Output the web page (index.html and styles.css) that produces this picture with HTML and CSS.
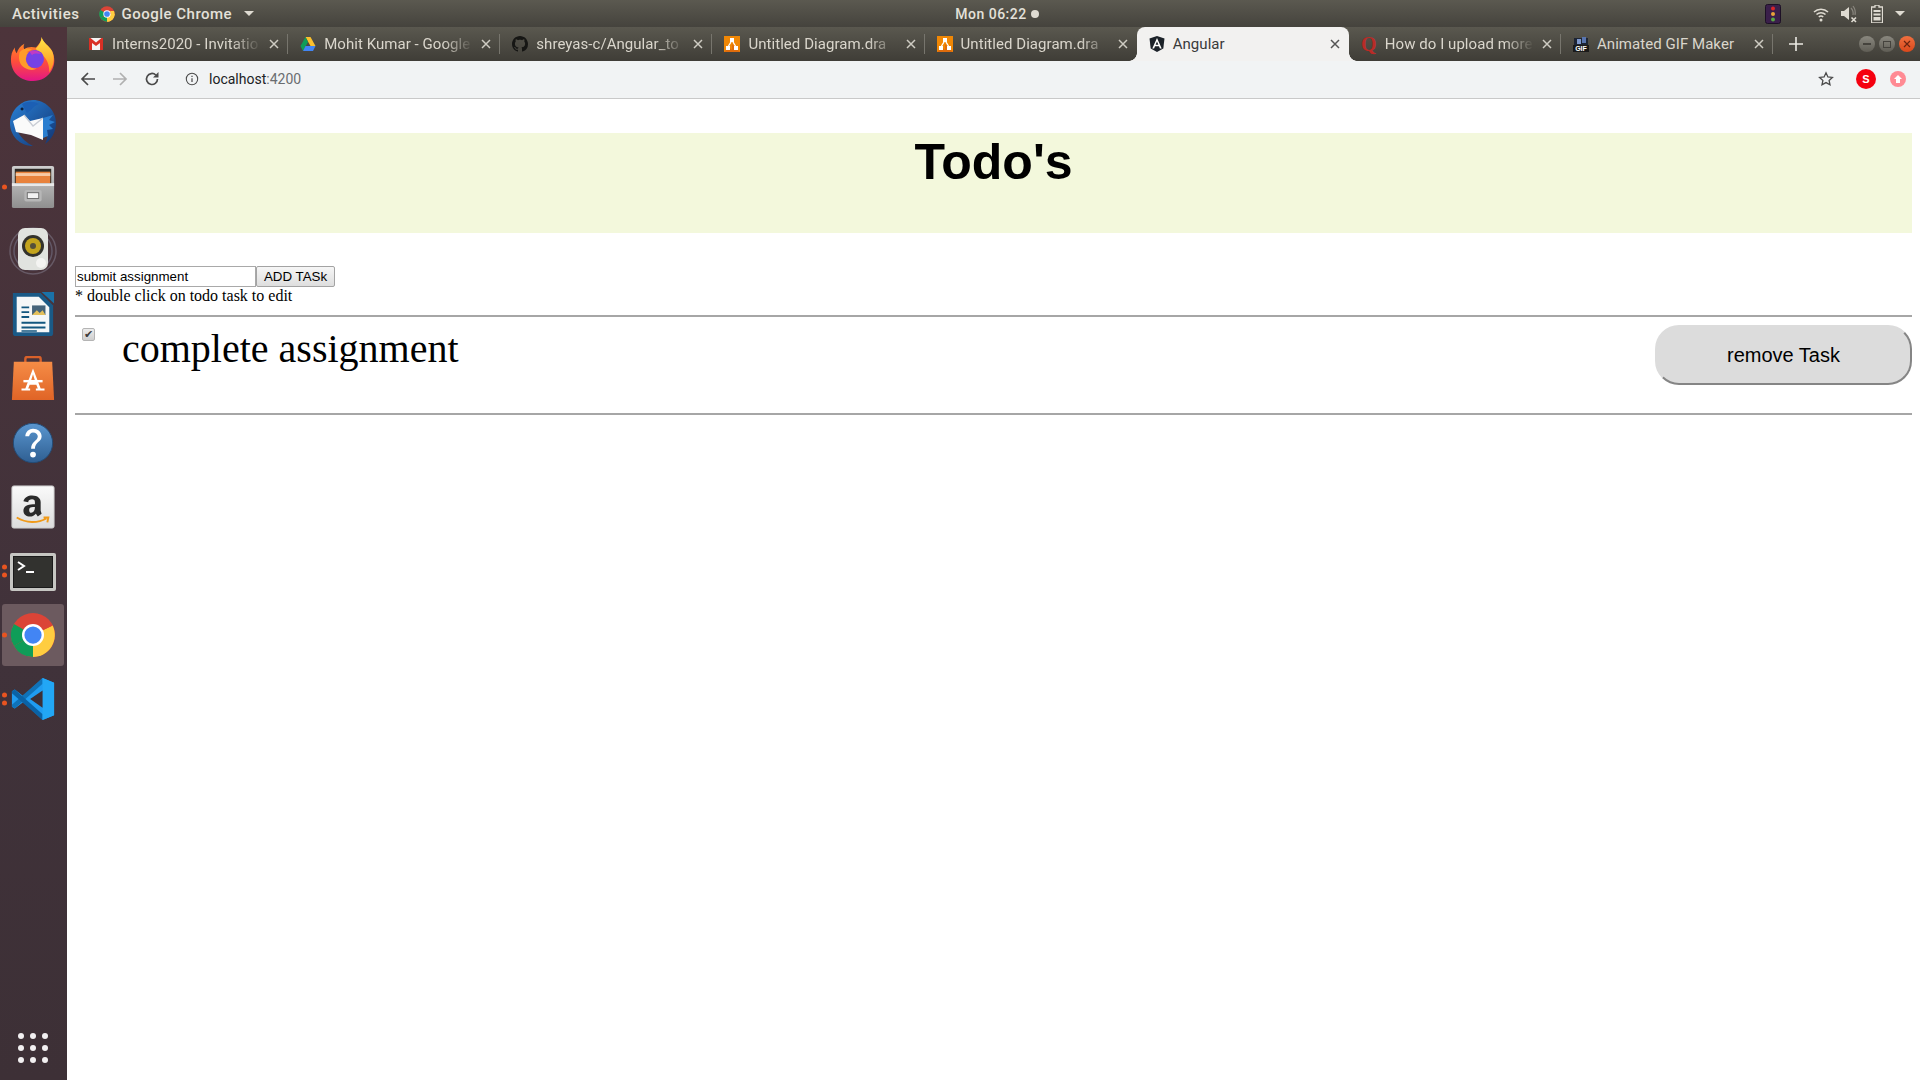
FILE: index.html
```html
<!DOCTYPE html>
<html lang="en">
<head>
<meta charset="utf-8">
<title>Angular</title>
<link rel="stylesheet" href="styles.css">
</head>
<body>
<svg class="sprite" xmlns="http://www.w3.org/2000/svg">
  <symbol id="x" viewBox="0 0 10 10"><path d="M1 1l8 8M9 1l-8 8" stroke="currentColor" stroke-width="1.5" fill="none"/></symbol>
  <symbol id="drawio" viewBox="0 0 16 16"><rect width="16" height="16" fill="#f08705"/><path d="M8 16V8l8 8zM0 16l5-5 5 5z" fill="#df6c0c"/><path d="M6 2h4v4H6zM2 10h4v4H2zM10 10h4v4h-4z" fill="#fff"/><path d="M7 6L4.5 10M9 6l2.500 4" stroke="#fff" stroke-width="1.400"/></symbol>
</svg>

<header class="topbar">
  <div class="top-left">
    <span class="top-item">Activities</span>
    <span class="app-menu">
      <svg class="chrome-mini" viewBox="0 0 48 48"><circle cx="24" cy="24" r="23" fill="#db4437"/><path d="M24 24L4 36a23 23 0 0 1 0-24z" fill="#0f9d58"/><path d="M4 35.500A23 23 0 0 0 24 47l12-23z" fill="#0f9d58"/><path d="M24 24h23a23 23 0 0 1-23 23z" fill="#ffcd40"/><path d="M45 15a23 23 0 0 1-21 32l12-23-3-9z" fill="#ffcd40"/><circle cx="24" cy="24" r="11" fill="#fff"/><circle cx="24" cy="24" r="8.500" fill="#4285f4"/></svg>
      <span class="top-item">Google Chrome</span>
      <span class="caret"></span>
    </span>
  </div>
  <div class="clock"><span class="top-item">Mon 06:22</span><span class="clock-dot"></span></div>
  <div class="tray">
    <svg class="tray-traffic" viewBox="0 0 16 20"><rect x=".5" y=".5" width="15" height="19" rx="2" fill="#3a1f4a" stroke="#1d1026"/><circle cx="8" cy="4.500" r="2" fill="#d9252a"/><circle cx="8" cy="10" r="2" fill="#e8a33a"/><circle cx="8" cy="15.500" r="2" fill="#58a845"/></svg>
    <svg class="tray-wifi" viewBox="0 0 16 16"><path d="M1 6a10 10 0 0 1 14 0M3.500 8.500a6.500 6.500 0 0 1 9 0M5.800 11a3.200 3.200 0 0 1 4.400 0" stroke="#dfdbd2" stroke-width="1.500" fill="none"/><circle cx="8" cy="14" r="1.500" fill="#dfdbd2"/></svg>
    <svg class="tray-vol" viewBox="0 0 18 18"><path d="M1 6h3l5-4v13l-5-4H1z" fill="#dfdbd2"/><path d="M11 3a8 8 0 0 1 2 7M13 1a11 11 0 0 1 2 9" stroke="#8a877f" stroke-width="1.200" fill="none"/><path d="M11.500 12.500l4.500 4.500M16 12.500l-4.500 4.500" stroke="#dfdbd2" stroke-width="1.600"/></svg>
    <svg class="tray-bat" viewBox="0 0 12 18"><path d="M4 0h4v2h3.500v16H.5V2H4z" fill="none" stroke="#dfdbd2" stroke-width="1.300"/><path d="M2.500 5h7v2h-7zM2.500 8.500h7v2h-7zM2.500 12h7v3.500h-7z" fill="#dfdbd2"/></svg>
    <span class="caret tray-caret"></span>
  </div>
</header>

<div class="desktop">
  <nav class="dock">
    <div class="dock-list">
      <div class="dock-item">
        <svg class="dock-icon" viewBox="0 0 48 48"><defs><linearGradient id="ffa" x1="0" y1="0" x2="0" y2="1"><stop offset="0" stop-color="#ff9a20"/><stop offset=".55" stop-color="#ff4f3a"/><stop offset="1" stop-color="#e31587"/></linearGradient><linearGradient id="ffb" x1="0" y1="0" x2="0" y2="1"><stop offset="0" stop-color="#ffe847"/><stop offset="1" stop-color="#ff8a1f"/></linearGradient></defs><path d="M33 1c1 6 8 9 11 15 3 7 3 13 0 19-4 8-12 12-20 12C11 47 1 38 1 25c0-5 1-9 4-13 0 3 1 5 2 6 1-4 4-8 8-10-1 2-1 4 0 6 3-3 8-3 12-2 3-3 6-7 6-11z" fill="url(#ffa)"/><path d="M33 1c1 6 8 9 11 15 3 7 2 15-3 22 0-6-1-12-6-17-3-3-7-5-8-8 3-3 6-7 6-12z" fill="url(#ffb)"/><path d="M10 17c3-4 8-5 13-3l-6 3c3 0 5 2 7 2-6 1-7 5-6 8 1 5 5 7 10 7-5 3-13 1-17-5-2-4-2-8-1-12z" fill="#ff9c2a"/><circle cx="26" cy="24" r="9.500" fill="#7542e5"/><path d="M20 16c4-2 10-1 13 3-4-1-8-1-10 1z" fill="#c03bc4"/></svg>
      </div>
      <div class="dock-item">
        <svg class="dock-icon wide" viewBox="0 0 48 48"><defs><linearGradient id="tb" x1="0" y1="0" x2="1" y2="1"><stop offset="0" stop-color="#2a82d8"/><stop offset="1" stop-color="#12336f"/></linearGradient></defs><path d="M24 1c12 0 23 10 23 23 0 9-5 17-11 21 3-5 3-12 0-18L24 36 9 33c3 6 9 11 15 14C11 47 1 37 1 24 1 20 3 12 9 7c4-4 9-6 15-6z" fill="url(#tb)"/><path d="M13 5c5-3 12-3 17 0-3 1-6 3-8 6l-4 3-3-5z" fill="#1c5fb4"/><path d="M13 8.500a1.500 1.500 0 1 0 .1 0z" fill="#0b1f3d"/><path d="M4 22l11-6 6 6 13-3v22L22 36 7 33z" fill="#fafafa"/><path d="M15 16l9 11 10-8" stroke="#c8ccd4" stroke-width="1.300" fill="none"/><path d="M34 19l10-3-4 5 6 2-6 3 4 4-6 1 1 6-5 2z" fill="#2a7ed0"/></svg>
      </div>
      <div class="dock-item running">
        <span class="pips"><span class="pip"></span></span>
        <svg class="dock-icon" viewBox="0 0 48 48"><defs><linearGradient id="cab" x1="0" y1="0" x2="0" y2="1"><stop offset="0" stop-color="#cfcfcf"/><stop offset="1" stop-color="#8f8f8f"/></linearGradient></defs><rect x="2" y="2" width="44" height="44" rx="2" fill="url(#cab)"/><rect x="5" y="5" width="38" height="16" fill="#2c2925"/><rect x="6" y="8" width="36" height="12" fill="#e8823c"/><rect x="6" y="9.500" width="36" height="3" fill="#f7c9a4"/><rect x="2" y="20" width="44" height="3" fill="#e9e9e9"/><rect x="15" y="27" width="18" height="12" rx="2" fill="#b7b7b7"/><rect x="18" y="30" width="12" height="6" fill="#f2f2f2" stroke="#555" stroke-width=".8"/></svg>
      </div>
      <div class="dock-item">
        <svg class="dock-icon wide" viewBox="0 0 48 48"><circle cx="24" cy="24" r="23" fill="none" stroke="#675a66" stroke-width="1.500"/><circle cx="24" cy="24" r="19" fill="none" stroke="#625867" stroke-width="1.500"/><rect x="9" y="1" width="30" height="42" rx="7" fill="#e1e3df"/><circle cx="24" cy="19" r="11" fill="#33322c"/><circle cx="24" cy="19" r="8" fill="#c3a41d"/><circle cx="24" cy="19" r="3" fill="#55503a"/><circle cx="32" cy="36" r="5" fill="#f4f4f2"/></svg>
      </div>
      <div class="dock-item">
        <svg class="dock-icon" viewBox="0 0 48 48"><path d="M3 1h29l13 13v29a3 3 0 0 1-3 3H6a3 3 0 0 1-3-3z" fill="#1a5a87"/><path d="M7 5h23l11 11v26H7z" fill="#f5f7f8"/><path d="M33 0h13v12z" fill="#1a72a8"/><path d="M12 15h8v2h-8zM12 20h8v2h-8zM12 25h8v2h-8zM12 31h25v2H12zM12 36h25v2H12zM12 40h16v1.500H12z" fill="#13577f"/><rect x="23" y="14" width="14" height="10" fill="#45637a"/><path d="M23 24l5-5 3 3 3-3 3 5z" fill="#e4c05b"/></svg>
      </div>
      <div class="dock-item">
        <svg class="dock-icon" viewBox="0 0 48 48"><defs><linearGradient id="shop" x1="0" y1="0" x2="0" y2="1"><stop offset="0" stop-color="#f58c46"/><stop offset="1" stop-color="#e06426"/></linearGradient></defs><path d="M16 8V3q0-2 2-2h12q2 0 2 2v5" fill="none" stroke="#d9612a" stroke-width="2.500"/><path d="M4 6h40l2 40H2z" fill="url(#shop)"/><path d="M24 13l-8 21h-4v2h9v-2h-2l1.500-4h7l1.500 4h-2v2h9v-2h-4zM21.500 27l2.500-8 2.500 8z" fill="#fff"/><rect x="14" y="25" width="20" height="2.500" fill="#fff"/></svg>
      </div>
      <div class="dock-item">
        <svg class="dock-icon" viewBox="0 0 48 48"><defs><linearGradient id="help" x1="0" y1="0" x2="0" y2="1"><stop offset="0" stop-color="#5a96cf"/><stop offset="1" stop-color="#2f5f92"/></linearGradient></defs><circle cx="24" cy="24" r="20.500" fill="url(#help)" stroke="#234b76"/><path d="M16 17c0-5 4-8 8-8 5 0 9 3 9 8 0 6-7 6-7 13h-4c0-8 7-8 7-13 0-2-2-4-5-4-2 0-4 2-4 4z" fill="#fff"/><circle cx="24" cy="36" r="3" fill="#fff"/></svg>
      </div>
      <div class="dock-item">
        <svg class="dock-icon" viewBox="0 0 48 48"><defs><linearGradient id="amz" x1="0" y1="0" x2="0" y2="1"><stop offset="0" stop-color="#fafafa"/><stop offset="1" stop-color="#dcdcdc"/></linearGradient></defs><rect x="2" y="2" width="44" height="44" rx="2" fill="url(#amz)" stroke="#c9c9c9"/><path d="M26 20v-1c0-2-1-3-3-3s-4 1-4 3l-5-1c1-4 5-6 9-6 6 0 9 3 9 7v9l1 3-4 3-2-3c-2 2-4 3-6 3-4 0-7-2-7-6 0-6 6-7 12-7zm0 4c-3 0-6 0-6 3 0 2 1 3 2 3 3 0 4-3 4-6z" fill="#2a2a2a"/><path d="M7 35c10 6 22 6 31 1M35 35h5l-1 5" stroke="#f09a1a" stroke-width="2" fill="none"/></svg>
      </div>
      <div class="dock-item running">
        <span class="pips"><span class="pip"></span><span class="pip"></span></span>
        <svg class="dock-icon wide" viewBox="0 0 48 48"><rect x="1" y="6" width="46" height="38" rx="2" fill="#c6c6c2"/><rect x="4" y="9" width="40" height="32" fill="#1a1a1a"/><rect x="5" y="10" width="38" height="30" fill="#32322f"/><path d="M9 15l6 4-6 4" stroke="#fff" stroke-width="2" fill="none"/><path d="M17 25h8" stroke="#fff" stroke-width="2"/></svg>
      </div>
      <div class="dock-item running active">
        <span class="pips"><span class="pip"></span></span>
        <svg class="dock-icon" viewBox="0 0 48 48"><circle cx="24" cy="24" r="23" fill="#db4437"/><path d="M24 24L4.100 35.500A23 23 0 0 1 4.100 12.500z" fill="#0f9d58"/><path d="M4.100 35.500A23 23 0 0 0 24 47l12-11.500L24 24z" fill="#0f9d58"/><path d="M24 24h0l20.500-10A23 23 0 0 1 24 47z" fill="#ffcd40"/><path d="M44.500 14H24v10z" fill="#db4437"/><circle cx="24" cy="24" r="11.500" fill="#fff"/><circle cx="24" cy="24" r="9" fill="#4285f4"/></svg>
      </div>
      <div class="dock-item running">
        <span class="pips"><span class="pip"></span><span class="pip"></span></span>
        <svg class="dock-icon" viewBox="0 0 48 48"><path d="M34 2L14 21 5 14l-3 2v16l3 2 9-7 20 19 12-5V7z" fill="#1f9cf0"/><path d="M34 2L2 30v2l3 2L34 8z" fill="#0f72b8"/><path d="M34 46L2 18v-2l3-2 29 26z" fill="#0a62a5"/><path d="M34 2l12 5v34l-12 5z" fill="#22a7f5"/><path d="M34 15L21 24l13 9z" fill="#3d2f35"/></svg>
      </div>
    </div>
    <div class="apps-grid"><i></i><i></i><i></i><i></i><i></i><i></i><i></i><i></i><i></i></div>
  </nav>

  <div class="browser">
    <div class="tabstrip">
      <div class="tab">
        <svg class="fav" viewBox="0 0 16 16"><rect x="1" y="2" width="14" height="12" fill="#f4f4f4"/><path d="M1 2v12h3V7l4 3 4-3v7h3V2h-1.500L8 6.500 2.500 2z" fill="#d93025"/></svg>
        <span class="tab-title">Interns2020 - Invitatio</span>
        <svg class="close"><use href="#x"/></svg>
      </div>
      <div class="tab">
        <svg class="fav" viewBox="0 0 16 16"><path d="M5.500 1h5l5 9h-5z" fill="#fbc02d"/><path d="M5.500 1L.5 10 3 15l5-9z" fill="#0f9d58"/><path d="M3 15h10l2.500-5H5.500z" fill="#4285f4"/></svg>
        <span class="tab-title">Mohit Kumar - Google</span>
        <svg class="close"><use href="#x"/></svg>
      </div>
      <div class="tab">
        <svg class="fav" viewBox="0 0 16 16"><path fill="#161614" d="M8 0C3.580 0 0 3.580 0 8c0 3.540 2.290 6.530 5.470 7.590.4.070.55-.17.55-.38 0-.19-.01-.82-.01-1.490-2.010.370-2.530-.49-2.690-.94-.09-.23-.48-.94-.82-1.130-.28-.15-.68-.52-.01-.53.630-.01 1.080.58 1.230.82.720 1.210 1.870.870 2.330.66.070-.52.280-.87.510-1.070-1.780-.2-3.640-.89-3.640-3.950 0-.87.310-1.590.820-2.150-.08-.2-.36-1.020.08-2.120 0 0 .67-.21 2.200.82.640-.18 1.320-.27 2-.27s1.360.09 2 .27c1.530-1.040 2.200-.82 2.200-.82.440 1.100.16 1.920.08 2.120.51.56.820 1.270.820 2.150 0 3.070-1.870 3.750-3.650 3.950.29.250.54.730.54 1.480 0 1.070-.01 1.930-.01 2.200 0 .21.150.46.550.38A8.010 8.010 0 0 0 16 8c0-4.420-3.580-8-8-8z"/></svg>
        <span class="tab-title">shreyas-c/Angular_to</span>
        <svg class="close"><use href="#x"/></svg>
      </div>
      <div class="tab">
        <svg class="fav"><use href="#drawio"/></svg>
        <span class="tab-title">Untitled Diagram.dra</span>
        <svg class="close"><use href="#x"/></svg>
      </div>
      <div class="tab">
        <svg class="fav"><use href="#drawio"/></svg>
        <span class="tab-title">Untitled Diagram.dra</span>
        <svg class="close"><use href="#x"/></svg>
      </div>
      <div class="tab tab-active">
        <svg class="fav" viewBox="0 0 16 16"><path d="M8 0l7.500 2.600-1.200 9.800L8 16l-6.300-3.600L.5 2.600z" fill="#1c2229"/><path d="M8 2L3.300 12.500h1.800l.9-2.300h4l.9 2.300h1.800zm0 3.600l1.400 3.200H6.600z" fill="#fff"/></svg>
        <span class="tab-title">Angular</span>
        <svg class="close"><use href="#x"/></svg>
      </div>
      <div class="tab">
        <span class="fav fav-quora">Q</span>
        <span class="tab-title">How do I upload more</span>
        <svg class="close"><use href="#x"/></svg>
      </div>
      <div class="tab">
        <svg class="fav" viewBox="0 0 16 16"><rect x="1" y="2" width="14" height="9" fill="#1d2433"/><rect x="4" y="3" width="4" height="5" fill="#7d97cc"/><rect x="9" y="1" width="4" height="6" fill="#5874ad"/><rect y="9" width="16" height="7" fill="#1a1a1a"/><text class="gif-text" x="8" y="15">GIF</text></svg>
        <span class="tab-title">Animated GIF Maker</span>
        <svg class="close"><use href="#x"/></svg>
      </div>
      <svg class="newtab" viewBox="0 0 14 14"><path d="M7 0v14M0 7h14" stroke="#eceae4" stroke-width="1.600"/></svg>
      <div class="winbtns">
        <span class="winbtn"><i class="w-min"></i></span>
        <span class="winbtn"><i class="w-max"></i></span>
        <span class="winbtn w-close"><svg viewBox="0 0 10 10"><path d="M2 2l6 6M8 2l-6 6" stroke="#6a2410" stroke-width="1.200"/></svg></span>
      </div>
    </div>

    <div class="toolbar">
      <svg class="tb-ico" viewBox="0 0 16 16"><path d="M15 8H2M8 2L2 8l6 6" stroke="#4a4a4a" stroke-width="1.700" fill="none"/></svg>
      <svg class="tb-ico" viewBox="0 0 16 16"><path d="M1 8h13M8 2l6 6-6 6" stroke="#b0b0b0" stroke-width="1.700" fill="none"/></svg>
      <svg class="tb-ico" viewBox="0 0 16 16"><path d="M13.500 8a5.500 5.500 0 1 1-1.700-4" stroke="#4a4a4a" stroke-width="1.700" fill="none"/><path d="M14.500 1v5.500H9z" fill="#4a4a4a"/></svg>
      <div class="omnibox">
        <svg class="info" viewBox="0 0 16 16"><circle cx="8" cy="8" r="6.500" fill="none" stroke="#4a4a4a" stroke-width="1.200"/><path d="M7.300 7h1.400v4.500H7.300zM7.300 4.300h1.400v1.400H7.300z" fill="#4a4a4a"/></svg>
        <span class="url">localhost<span class="url-port">:4200</span></span>
        <svg class="star" viewBox="0 0 16 16"><path d="M8 1.800l1.900 4.100 4.500.5-3.300 3 .9 4.400L8 11.600l-4 2.200.9-4.400-3.300-3 4.500-.5z" fill="none" stroke="#4a4a4a" stroke-width="1.300"/></svg>
      </div>
      <span class="ext-s">S</span>
      <span class="ext-up"><svg viewBox="0 0 10 10"><path d="M5 1l4 4H7v4H3V5H1z" fill="#fff"/></svg></span>
    </div>

    <main class="page">
      <div class="band"><h1 class="title">Todo's</h1></div>
      <div class="addrow">
        <input class="task-input" type="text" value="submit assignment">
        <button class="add-btn" type="button">ADD TASk</button>
      </div>
      <p class="note">* double click on todo task to edit</p>
      <hr class="rule rule-top">
      <div class="task">
        <input class="task-check" type="checkbox" checked>
        <span class="task-text">complete assignment</span>
        <button class="remove-btn" type="button">remove Task</button>
      </div>
      <hr class="rule">
    </main>
  </div>
</div>
</body>
</html>
```

FILE: styles.css
```css
* { box-sizing: border-box; }
html, body { margin: 0; height: 100%; }
body {
  width: 1920px;
  height: 1080px;
  overflow: hidden;
  display: flex;
  flex-direction: column;
  background: #fff;
  font-family: "Liberation Serif", serif;
}
.sprite { display: none; }

/* top bar */
.topbar {
  flex: 0 0 27px;
  display: grid;
  grid-template-columns: 1fr auto 1fr;
  align-items: center;
  background: linear-gradient(#5b5950, #45433d);
  color: #e4e1d9;
  font: 500 14px Roboto, "Noto Sans", sans-serif;
}
.top-left { display: flex; align-items: center; padding-left: 12px; gap: 20px; font-size: 15px; }
.top-item { letter-spacing: .5px; white-space: nowrap; }
.app-menu { display: flex; align-items: center; gap: 6px; }
.chrome-mini { width: 16px; height: 16px; }
.caret {
  width: 0; height: 0; margin-left: 6px;
  border-left: 5px solid transparent;
  border-right: 5px solid transparent;
  border-top: 5px solid #dfdbd2;
}
.clock { display: flex; align-items: center; gap: 4px; margin-left: 74px; }
.clock-dot { width: 8px; height: 8px; border-radius: 50%; background: #dfdbd2; }
.tray { display: flex; align-items: center; justify-content: flex-end; padding-right: 15px; }
.tray-traffic { width: 16px; height: 20px; margin-right: 32px; }
.tray-wifi { width: 16px; height: 16px; margin-right: 11px; }
.tray-vol { width: 18px; height: 18px; margin-right: 13px; }
.tray-bat { width: 12px; height: 18px; margin-right: 6px; }
.tray-caret { margin-left: 6px; }

/* desktop */
.desktop { flex: 1; display: flex; min-height: 0; }
.dock {
  flex: 0 0 67px;
  display: flex;
  flex-direction: column;
  justify-content: space-between;
  background: linear-gradient(#4d343b, #40323a 60%, #3d3036);
}
.dock-list { display: flex; flex-direction: column; }
.dock-item {
  position: relative;
  flex: 0 0 62px;
  margin: 1px 3px 1px 2px;
  display: flex;
  align-items: center;
  justify-content: center;
  border-radius: 3px;
}
.dock-item.active { background: #6c5a5f; }
.dock-icon { width: 46px; height: 46px; display: block; }
.dock-icon.wide { width: 48px; height: 48px; }
.pips {
  position: absolute;
  left: 0; top: 50%;
  transform: translateY(-50%);
  display: flex; flex-direction: column; gap: 3px;
}
.pip { width: 5px; height: 5px; border-radius: 50%; background: #e95420; display: block; }
.apps-grid {
  display: grid;
  grid-template-columns: repeat(3, 6px);
  gap: 6px;
  justify-content: center;
  padding: 0 1px 17px 0;
}
.apps-grid i { width: 6px; height: 6px; border-radius: 50%; background: #f2f0f1; display: block; }

/* browser */
.browser { flex: 1; display: flex; flex-direction: column; min-width: 0; }
.tabstrip {
  flex: 0 0 34px;
  display: flex;
  align-items: stretch;
  padding-left: 9px;
  background: linear-gradient(#5a584f, #3f3d37);
  color: #dad6cc;
  font: 400 15px Roboto, "Noto Sans", sans-serif;
}
.tab {
  position: relative;
  flex: 0 0 212.150px;
  min-width: 0;
  display: flex;
  align-items: center;
  padding: 0 9px 0 12px;
  gap: 8px;
}
.tab::after {
  content: "";
  position: absolute;
  right: 0; top: 7px; bottom: 7px;
  width: 1px;
  background: #77756d;
}
.tab:nth-child(5)::after { display: none; }
.tab-active {
  background: #f2f1f0;
  color: #3a3a3a;
  border-radius: 8px 8px 0 0;
}
.tab-active::before, .tab-active::after {
  content: "";
  position: absolute;
  top: auto;
  bottom: 0;
  width: 8px;
  height: 8px;
}
.tab-active::before {
  left: -8px;
  background: radial-gradient(circle at 0 0, transparent 7.5px, #f2f1f0 8px);
}
.tab-active::after {
  right: -8px;
  background: radial-gradient(circle at 100% 0, transparent 7.5px, #f2f1f0 8px);
}
.fav { flex: 0 0 16px; width: 16px; height: 16px; display: block; }
.fav-quora {
  font: 700 20px/16px "Liberation Serif", serif;
  color: #b92b27;
  text-align: center;
}
.gif-text { font: 700 7px "Liberation Sans", sans-serif; fill: #fff; text-anchor: middle; }
.tab-title {
  flex: 1;
  min-width: 0;
  white-space: nowrap;
  letter-spacing: .05px;
  -webkit-mask-image: linear-gradient(to right, #000 80%, transparent 100%);
  mask-image: linear-gradient(to right, #000 80%, transparent 100%);
}
.tab-active .tab-title, .tab:nth-child(8) .tab-title { -webkit-mask-image: none; mask-image: none; }
.close { flex: 0 0 10px; width: 10px; height: 10px; color: #cfccc3; }
.tab-active .close { color: #555; }
.newtab { width: 14px; height: 14px; align-self: center; margin-left: 16px; }
.winbtns { margin-left: auto; display: flex; align-items: center; gap: 4px; padding-right: 5px; }
.winbtn {
  width: 16px; height: 16px; border-radius: 50%;
  background: linear-gradient(#8a887f, #5f5d55);
  display: flex; align-items: center; justify-content: center;
}
.w-min { width: 8px; height: 2px; background: #45433d; }
.w-max { width: 8px; height: 7px; border: 1px solid #45433d; }
.w-close { background: linear-gradient(#f0703f, #d9481b); }
.w-close svg { width: 10px; height: 10px; }

.toolbar {
  flex: 0 0 38px;
  display: flex;
  align-items: center;
  padding: 0 14px 2px 13px;
  gap: 16px;
  background: #f1f3f4;
  border-bottom: 1px solid #c9c9c9;
}
.tb-ico { width: 16px; height: 16px; flex: 0 0 16px; }
.omnibox {
  flex: 1;
  display: flex;
  align-items: center;
  height: 30px;
  padding: 0 6px 0 9px;
  gap: 9px;
  font: 400 14px Roboto, "Noto Sans", sans-serif;
  color: #202124;
}
.info { width: 14px; height: 14px; }
.url-port { color: #6a6d70; }
.url { flex: 1; margin-left: 1px; }
.star { width: 16px; height: 16px; }
.ext-s {
  width: 20px; height: 20px; border-radius: 50%;
  background: #f5000f; color: #fff;
  font: 700 11px/20px "Liberation Sans", sans-serif;
  text-align: center;
}
.ext-up {
  width: 16px; height: 16px; border-radius: 50%;
  background: #ff8a93;
  display: flex; align-items: center; justify-content: center;
  margin-left: -2px;
}
.ext-up svg { width: 10px; height: 10px; }

/* page */
.page {
  flex: 1;
  padding: 34px 8px 0 8px;
  background: #fff;
  color: #000;
  font: 16px "Liberation Serif", serif;
}
.band { height: 100px; background: #f3f8dc; }
.title {
  margin: 0;
  padding-top: 2px;
  text-align: center;
  font: 700 50px/55px "Liberation Sans", sans-serif;
}
.addrow { display: flex; margin-top: 33px; height: 21px; }
.task-input {
  width: 181px; height: 21px; margin: 0; padding: 1px 1px;
  border: 1px solid #a9a9a9;
  font: 13.333px "Liberation Sans", sans-serif;
  color: #000;
  background: #fff;
}
.add-btn {
  width: 79px; height: 21px; margin: 0; padding: 0;
  border: 1px solid #a3a3a3;
  border-radius: 2px;
  background: linear-gradient(#f6f6f6, #dedede);
  font: 13.333px "Liberation Sans", sans-serif;
  color: #000;
}
.note { margin: 0; line-height: 18px; }
.rule { margin: 0; border: 0; height: 2px; background: #a6a6a6; }
.rule-top { margin-top: 10px; }
.task {
  display: flex;
  align-items: flex-start;
  height: 96px;
}
.task-check {
  appearance: none;
  width: 13px; height: 13px;
  margin: 11px 0 0 7px;
  flex: 0 0 13px;
  display: flex; align-items: center; justify-content: center;
  border: 1px solid #b4b4b4;
  border-radius: 2px;
  background: linear-gradient(#ececec, #cfcfcf);
}
.task-check::after {
  content: "\2714";
  font: 11px/11px "DejaVu Sans", sans-serif;
  color: #3c3c3c;
}
.task-text { margin: 9px 0 0 27px; flex: 1; font-size: 40px; line-height: 46px; }
.remove-btn {
  width: 257px; height: 60px; margin-top: 8px;
  border: 2px solid;
  border-color: #dcdcdc #858585 #858585 #dcdcdc;
  border-radius: 24px;
  background: #dcdcdc;
  font: 20px "Liberation Sans", sans-serif;
  color: #000;
}
```
